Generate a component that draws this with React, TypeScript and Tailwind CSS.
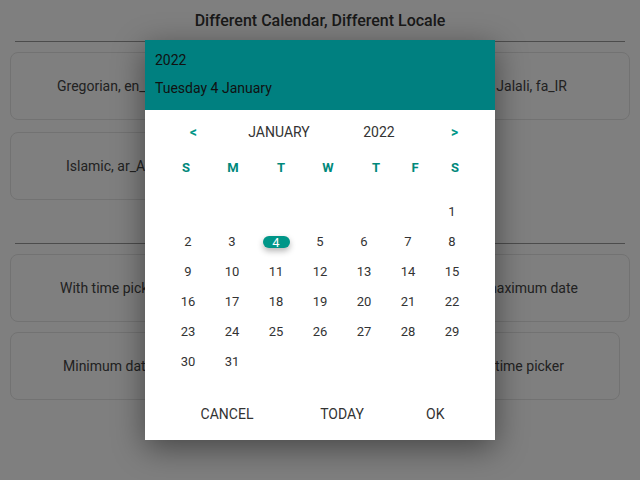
import React from 'react';

const weekDays = [
  { label: 'S', w: 'w-[46px]' },
  { label: 'M', w: 'w-[48px]' },
  { label: 'T', w: 'w-[48px]' },
  { label: 'W', w: 'w-[46px]' },
  { label: 'T', w: 'w-[50px]' },
  { label: 'F', w: 'w-[28px]' },
  { label: 'S', w: 'w-[52px]' },
];

function Card({ text, className = '' }: { text: string; className?: string }) {
  return (
    <div
      className={
        'h-[68px] rounded-lg border border-[#e4e4e4] flex items-center whitespace-nowrap overflow-hidden text-[14px] text-[#444] ' +
        className
      }
    >
      {text}
    </div>
  );
}

export default function App() {
  // Jan 2022 starts on a Saturday
  const cells: (number | null)[] = [null, null, null, null, null, null];
  for (let d = 1; d <= 31; d++) cells.push(d);

  return (
    <div className="relative w-[640px] h-[480px] overflow-hidden bg-white font-['Roboto',sans-serif]">
      {/* page underneath */}
      <div className="pt-[11px]">
        <h1 className="text-center text-[16px] font-medium text-[#333] leading-[20px]">
          Different Calendar, Different Locale
        </h1>
        <div className="mx-[15px] mt-[10px] border-t border-[#999]" />
        <div className="grid grid-cols-2 gap-x-5 gap-y-[12px] px-[10px] mt-[10px]">
          <Card text="Gregorian, en_US, week starts Sunday" className="pl-[46px]" />
          <Card text="Persian calendar, Jalali, fa_IR" className="justify-end pr-[62px]" />
          <Card text="Islamic, ar_AE with arabic digits" className="pl-[55px]" />
          <div />
        </div>
        <div className="mx-[15px] mt-[43px] border-t border-[#999]" />
        <div className="grid grid-cols-2 gap-x-5 gap-y-[10px] px-[10px] mt-[10px]">
          <Card text="With time picker (24 hour)" className="pl-[49px]" />
          <Card text="Minimum and maximum date" className="justify-end pr-[51px]" />
          <Card text="Minimum date with time" className="pl-[52px]" />
          <Card text="Range with time picker" className="justify-end pr-[55px] mr-[10px]" />
        </div>
      </div>

      {/* backdrop */}
      <div className="absolute inset-0 bg-black/50" />

      {/* dialog */}
      <div className="absolute left-[145px] top-[40px] w-[350px] h-[400px] bg-white shadow-[0_8px_30px_rgba(0,0,0,0.45)] flex flex-col">
        <div className="h-[70px] bg-[#008080] px-[10px] pt-[10px] text-[14px] text-[#111]">
          <div className="leading-[20px]">2022</div>
          <div className="leading-[20px] mt-[8px]">Tuesday 4 January</div>
        </div>

        <div className="flex items-center h-[24px] mt-[10px] text-[14px] text-[#333]">
          <span className="w-[52px] text-right text-[#009688] font-bold">&lt;</span>
          <span className="w-[90px] text-center ml-[37px]">JANUARY</span>
          <span className="w-[50px] text-center ml-[30px]">2022</span>
          <span className="ml-[47px] text-[#009688] font-bold">&gt;</span>
        </div>

        <div className="flex ml-[18px] mt-[12px] h-[24px] items-center text-[13px] font-bold text-[#00897b]">
          {weekDays.map((d, i) => (
            <span key={i} className={d.w + ' text-center'}>
              {d.label}
            </span>
          ))}
        </div>

        <div className="grid grid-cols-[repeat(7,44px)] auto-rows-[30px] ml-[21px] mt-[17px] text-[13px] text-[#333]">
          {cells.map((d, i) => (
            <div key={i} className="flex items-center justify-center">
              {d === 4 ? (
                <span className="w-[27px] h-[12px] rounded-full bg-[#009688] text-white flex items-center justify-center shadow-[0_3px_6px_rgba(0,0,0,0.3)] leading-none">
                  4
                </span>
              ) : (
                d
              )}
            </div>
          ))}
        </div>

        <div className="mt-auto mb-[15px] flex text-[14px] text-[#333] h-[22px] items-center">
          <span className="w-[164px] text-center">CANCEL</span>
          <span className="w-[66px] text-center">TODAY</span>
          <span className="ml-[51px]">OK</span>
        </div>
      </div>
    </div>
  );
}
